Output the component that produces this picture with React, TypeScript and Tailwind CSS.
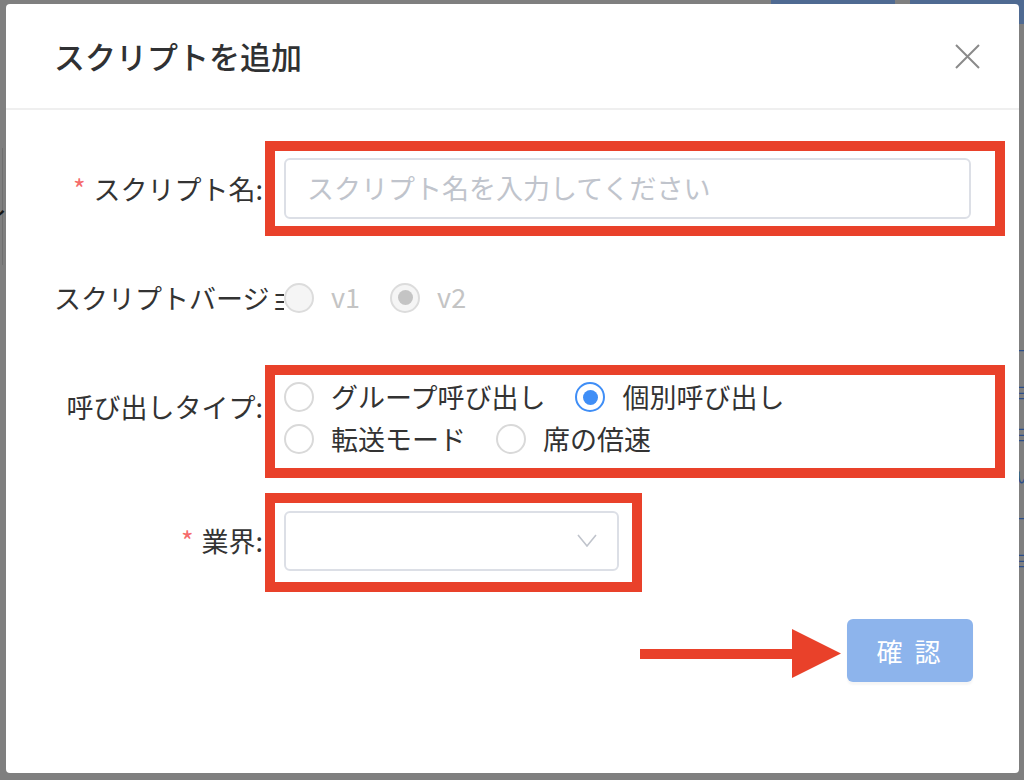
import React from "react";

const font = { fontFamily: '"Noto Sans CJK JP", "Noto Sans", sans-serif' };

function Radio({
  label,
  checked = false,
  disabled = false,
  h = "h-[42px]",
}: {
  label: string;
  checked?: boolean;
  disabled?: boolean;
  h?: string;
}) {
  let circle = "border-[#d9d9d9] bg-white";
  if (disabled) circle = "border-[#dcdcdc] bg-[#f5f5f5]";
  if (checked && !disabled) circle = "border-[#3f8ef6] bg-white";
  return (
    <label className={`inline-flex items-center mr-[30px] ${h}`}>
      <span
        className={`flex h-[30px] w-[30px] shrink-0 items-center justify-center rounded-full border-2 ${circle}`}
      >
        {checked && (
          <span
            className={`block h-[15px] w-[15px] rounded-full ${
              disabled ? "bg-[#c4c4c4]" : "bg-[#3f8ef6]"
            }`}
          />
        )}
      </span>
      <span
        className={`pl-[17px] text-[27px] whitespace-nowrap ${
          disabled ? "text-[#c4c4c4]" : "text-[#333333]"
        }`}
      >
        {label}
      </span>
    </label>
  );
}

function Label({ children, required = false }: { children: React.ReactNode; required?: boolean }) {
  return (
    <div className="w-[230px] shrink-0 overflow-hidden whitespace-nowrap pr-[21px] text-right text-[27px] leading-[61px] text-[#333333]">
      {required && <span className="mr-[8px] text-[#f56c6c]">*</span>}
      {children}
    </div>
  );
}

export default function App() {
  return (
    <div className="relative h-[780px] w-full overflow-hidden bg-[#7f7f7f] pl-[6px] pt-[4px]" style={font}>
      {/* faint page behind the overlay */}
      <div className="absolute left-[771px] top-0 h-[20px] w-[124px] bg-[#4f6a92]" />
      <div className="absolute left-[910px] top-0 h-[24px] w-[114px] bg-[#4f6a92]" />
      <div className="absolute left-[2px] top-[148px] h-[117px] w-[1px] bg-[#6f6f6f]" />
      <div className="absolute left-[-19px] top-[200px] text-[27px] leading-[40px] text-[#151515]">イ</div>
      <div className="absolute left-[1016px] top-[340px] flex flex-col gap-[22px] text-[16px] leading-[20px] text-[#2d4f8a]">
        <span>一</span>
        <span>三</span>
        <span>三</span>
        <span>い</span>
        <span>一</span>
        <span>三</span>
      </div>

      <div className="relative h-[769px] w-[1013px] rounded-[4px] bg-white">
        {/* header */}
        <div className="flex h-[104px] items-center justify-between pl-[48px] pr-[39px]">
          <div className="text-[31px] font-medium leading-[40px] text-[#303133]">スクリプトを追加</div>
          <svg width="25" height="25" viewBox="0 0 25 25" fill="none">
            <path d="M1 1L24 24M24 1L1 24" stroke="#8a8a8a" strokeWidth="2" />
          </svg>
        </div>
        <div className="h-[2px] bg-[#efefef]" />

        {/* body */}
        <div className="px-[48px] pt-[48px]">
          <div className="mb-[48px] flex items-center">
            <Label required>スクリプト名:</Label>
            <div className="flex h-[61px] flex-1 items-center rounded-[6px] border-2 border-[#dcdfe6] pl-[21px] text-[27px] text-[#c0c4cc]">
              スクリプト名を入力してください
            </div>
          </div>

          <div className="mb-[48px] flex h-[61px] items-center">
            <Label>スクリプトバージョン:</Label>
            <div className="flex items-center">
              <Radio label="v1" disabled />
              <Radio label="v2" checked disabled />
            </div>
          </div>

          <div className="mb-[50px] flex items-start">
            <Label>呼び出しタイプ:</Label>
            <div className="flex flex-1 flex-wrap">
              <Radio label="グループ呼び出し" />
              <Radio label="個別呼び出し" checked />
              <Radio label="転送モード" />
              <Radio label="席の倍速" />
            </div>
          </div>

          <div className="mb-[48px] flex items-center">
            <Label required>業界:</Label>
            <div className="flex h-[60px] w-[335px] items-center justify-end rounded-[6px] border-2 border-[#dcdfe6] pr-[20px]">
              <svg width="20" height="13" viewBox="0 0 20 13" fill="none">
                <path d="M1 1L10 12L19 1" stroke="#c0c4cc" strokeWidth="1.6" />
              </svg>
            </div>
          </div>

          <div className="flex justify-end">
            <button className="mr-[-2px] flex h-[63px] w-[126px] items-center justify-center rounded-[6px] bg-[#8db4ec] text-[26px] tracking-[3px] text-white shadow-[0_3px_2px_rgba(0,0,0,0.04)]">
              確 認
            </button>
          </div>
        </div>

        {/* annotation overlays */}
        <div className="pointer-events-none absolute left-[259px] top-[137px] h-[95px] w-[740px] border-[10px] border-[#e9412a]" />
        <div className="pointer-events-none absolute left-[259px] top-[361px] h-[113px] w-[740px] border-[10px] border-[#e9412a]" />
        <div className="pointer-events-none absolute left-[259px] top-[489px] h-[99px] w-[377px] border-[10px] border-[#e9412a]" />
        <svg className="pointer-events-none absolute left-[634px] top-[625px]" width="201" height="49" viewBox="0 0 201 49">
          <rect x="0" y="20" width="154" height="10" fill="#e9412a" />
          <polygon points="152,0 201,24.5 152,49" fill="#e9412a" />
        </svg>
      </div>
    </div>
  );
}
